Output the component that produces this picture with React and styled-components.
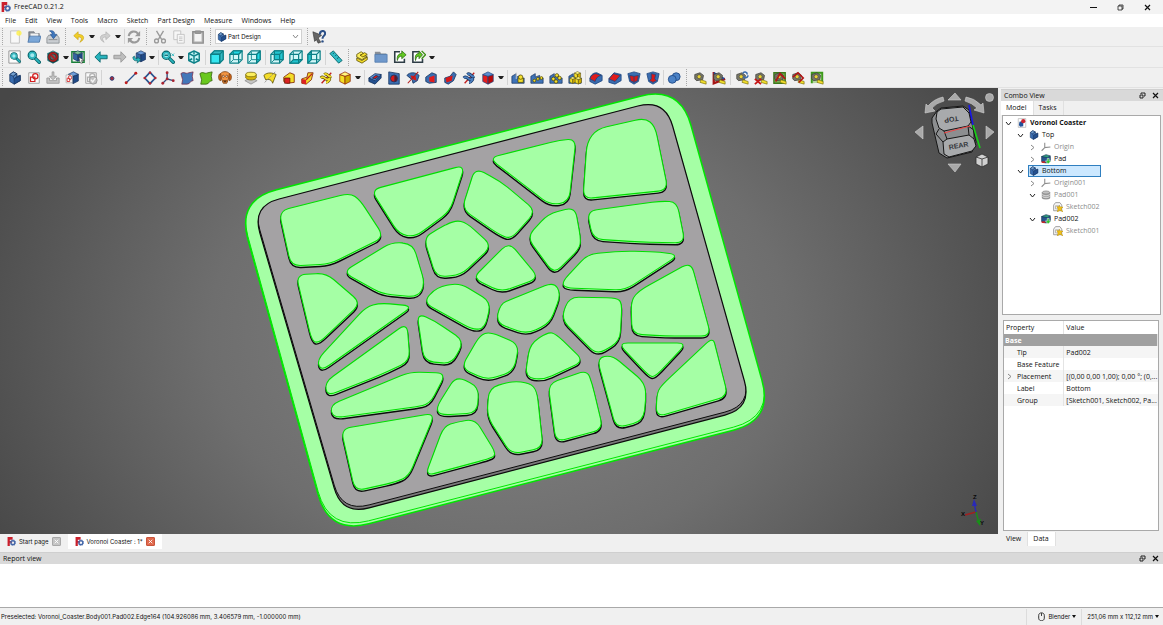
import { useState } from "react";
import styled, { createGlobalStyle } from "styled-components";

const GlobalStyle = createGlobalStyle`
  * {
    box-sizing: border-box;
  }

  body {
    margin: 0;
    background: #f0f0f0;
    color: #111;
    font-family: "Open Sans", "Noto Sans", sans-serif;
    font-size: 7px;
    line-height: 12px;
  }

  button,
  select {
    margin: 0;
    padding: 0;
    border: none;
    background: none;
    color: inherit;
    font: inherit;
  }
`;

const Window = styled.div`
  display: flex;
  flex-direction: column;
  min-height: 100vh;
`;

const TitleBar = styled.header`
  display: flex;
  align-items: center;
  gap: 3px;
  height: 14px;
  padding: 0 4px 0 1px;
  background: #f3f3f3;
`;

const Title = styled.h1`
  flex: 1;
  margin: 0;
  font-size: 7px;
  font-weight: 400;
`;

const WindowButton = styled.button`
  display: flex;
  align-items: center;
  justify-content: center;
  width: 24px;
  height: 12px;
`;

const MenuBar = styled.nav`
  display: flex;
  gap: 9px;
  height: 13px;
  padding-left: 5px;
  background: #fff;
`;

const ToolRow = styled.div`
  display: flex;
  align-items: center;
  height: ${({ $height }) => $height || 20}px;
  border-bottom: 1px solid #e2e2e2;
  background: #f0f0f0;
`;

const ToolGroup = styled.div`
  display: flex;
  justify-content: space-between;
  width: ${({ $width }) => $width || 14}px;
`;

const ToolButton = styled.button`
  display: flex;
  width: 14px;
  height: 14px;

  svg {
    width: 14px;
    height: 14px;
  }
`;

const CaretButton = styled.button`
  width: 9px;
  height: 14px;
  padding-left: 3px;

  &::before {
    content: "";
    display: block;
    border: 2px solid transparent;
    border-top: 3px solid #222;
    border-bottom: none;
  }
`;

const Space = styled.span`
  width: ${({ $width }) => $width || 7}px;
  height: 15px;
  background: ${({ $line }) =>
    $line ? "linear-gradient(#d4d4d4, #d4d4d4) center / 1px 100% no-repeat" : "none"};
`;

const Grip = styled.span`
  width: ${({ $width }) => $width || 12}px;
  height: 17px;
  padding-left: ${({ $width }) => ($width === 8 ? 2 : 5)}px;

  &::before {
    content: "";
    display: block;
    width: 2px;
    height: 100%;
    border-left: 1px dotted #a8a8a8;
  }
`;

const WorkbenchBox = styled.label`
  display: flex;
  align-items: center;
  gap: 1px;
  width: 87px;
  height: 15px;
  padding: 0 2px 0 1px;
  border: 1px solid #d0d0d0;
  background: #fff;

  svg {
    flex: none;
    width: 10px;
    height: 10px;
  }

  svg:last-child {
    width: 7px;
    height: 7px;
  }
`;

const WorkbenchSelect = styled.select`
  flex: 1;
  appearance: none;
  min-width: 0;
  height: 12px;
  outline: none;
  font-family: Inter, sans-serif;
  font-size: 6px;
`;

const Middle = styled.main`
  display: flex;
  flex: 1;
`;

const MdiArea = styled.section`
  display: flex;
  flex: 1;
  flex-direction: column;
  min-width: 0;
`;

const Viewport = styled.div`
  position: relative;
  display: flex;
  flex: 1;
  background: radial-gradient(ellipse 58% 100% at 50% 55%, #858585, #6e6e6e 50%, #474747 100%);
`;

const Scene = styled.svg`
  flex: 1;
  width: 100%;
  height: 100%;
  min-height: 0;
`;

const NavCubeOverlay = styled.div`
  position: absolute;
  top: 0;
  right: 0;
  width: 86px;
  height: 88px;
`;

const AxisOverlay = styled.div`
  position: absolute;
  right: 8px;
  bottom: 4px;
  width: 32px;
  height: 38px;
`;

const MdiTabs = styled.div`
  display: flex;
  height: 15px;
  font-family: Inter, sans-serif;
  font-size: 6px;
`;

const MdiTab = styled.div`
  display: flex;
  align-items: center;
  gap: 3px;
  padding: 0 7px;
  background: ${({ $active }) => ($active ? "#fff" : "#f0f0f0")};
`;

const CloseTab = styled.button`
  display: flex;
  align-items: center;
  justify-content: center;
  width: 9px;
  height: 9px;
  border: 1px solid ${({ $active }) => ($active ? "#c9553c" : "#a8a8a8")};
  border-radius: 1px;
  background: ${({ $active }) => ($active ? "#e0694c" : "#c4c4c4")};
  color: #fff;
`;

const Dock = styled.aside`
  display: flex;
  flex-direction: column;
  width: 165px;
  padding: 0 0 3px 3px;
`;

const DockHeader = styled.header`
  display: flex;
  align-items: center;
  gap: 6px;
  height: 12px;
  margin-top: ${({ $top }) => $top || 0}px;
  padding: 0 4px 0 3px;
  border-top: 1px solid #cfcfcf;
  background: #d9d9d9;
`;

const DockTitle = styled.h2`
  flex: 1;
  margin: 0;
  font-size: 7px;
  font-weight: 400;
  line-height: 11px;
`;

const DockButton = styled.button`
  display: flex;
  width: 7px;
  height: 7px;
`;

const Tabs = styled.div`
  display: flex;
  height: 14px;
`;

const Tab = styled.button`
  padding: 0 6px 0 5px;
  border-right: 1px solid #e0e0e0;
  background: ${({ $active }) => ($active ? "#fff" : "#f0f0f0")};
`;

const Tree = styled.ul`
  height: 200px;
  margin: 0 2px 5px 1px;
  padding: 1px 0;
  border: 1px solid #a9a9a9;
  background: #fff;
  list-style: none;
`;

const TreeItem = styled.li`
  display: flex;
  align-items: center;
  height: 12px;
  padding-left: ${({ $level }) => 2 + $level * 12}px;
  color: ${({ $dim }) => ($dim ? "#8c8c8c" : "#111")};
  font-weight: ${({ $bold }) => ($bold ? 700 : 400)};
`;

const Expander = styled.button`
  display: flex;
  width: 11px;
  height: 7px;
`;

const TreeLabel = styled.span`
  display: flex;
  align-items: center;
  gap: 3px;
  min-width: ${({ $selected }) => ($selected ? 73 : 0)}px;
  height: 12px;
  border: 1px solid ${({ $selected }) => ($selected ? "#2f7fc0" : "transparent")};
  background: ${({ $selected }) => ($selected ? "#cce8ff" : "none")};

  svg {
    width: 10px;
    height: 10px;
  }
`;

const PropertyBox = styled.div`
  flex: 1;
  margin: 0 4px 1px 2px;
  border: 1px solid #a9a9a9;
  background: #fff;
`;

const PropertyTable = styled.table`
  width: 100%;
  border-collapse: collapse;
  table-layout: fixed;

  th,
  td {
    height: 12px;
    padding: 0 0 0 2px;
    font-weight: 400;
    line-height: 11px;
    text-align: left;
    white-space: nowrap;
  }

  th:first-child,
  td:first-child {
    border-right: 1px solid #e4e4e4;
  }

  thead th {
    height: 13px;
  }
`;

const GroupRow = styled.tr`
  background: #a0a0a0;
  color: #fff;

  && th {
    font-weight: 700;
    padding-left: 1px;
  }
`;

const PropertyRow = styled.tr`
  background: ${({ $odd }) => ($odd ? "#f5f5f5" : "#fff")};
`;

const PropertyName = styled.span`
  display: flex;
  align-items: center;
  padding-left: ${({ $expandable }) => ($expandable ? 0 : 11)}px;
`;

const ReportView = styled.section`
  display: flex;
  flex-direction: column;
`;

const ReportBody = styled.div`
  height: 44px;
  border-bottom: 1px solid #a9a9a9;
  background: #fff;
`;

const StatusBar = styled.footer`
  display: flex;
  align-items: center;
  height: 17px;
  padding: 0 4px 0 1px;
  font-family: Inter, sans-serif;
  font-size: 6px;
`;

const StatusText = styled.span`
  flex: 1;
`;

const StatusButton = styled.button`
  display: flex;
  align-items: center;
  gap: 2px;
  height: 16px;
  padding-left: ${({ $wide }) => ($wide ? 10 : 5)}px;
  padding-right: ${({ $wide }) => ($wide ? 5 : 0)}px;
  border-left: 1px solid #dcdcdc;

  &::after {
    content: "";
    border: 2px solid transparent;
    border-top: 3px solid #111;
    border-bottom: none;
  }
`;

/* ---------- icons ---------- */

const Svg = ({ children, size = 16, box = "0 0 16 16" }) => (
  <svg viewBox={box} width={size} height={size} aria-hidden="true">
    {children}
  </svg>
);

const Cube = ({ top, left, right, line = "#111", x = 0, y = 0, s = 1 }) => (
  <g transform={`translate(${x} ${y}) scale(${s})`} stroke={line} strokeWidth="0.8" strokeLinejoin="round">
    <path d="M2 4 8 6 8 15 2 12Z" fill={left} />
    <path d="M8 6 14 4 14 12 8 15Z" fill={right} />
    <path d="M2 4 8 1 14 4 8 6Z" fill={top} />
  </g>
);

const Logo = () => (
  <>
    <path d="M1 0H10V5H5V7H9V10H5V16H1Z" fill="#cb1f2b" />
    <circle cx="10.500" cy="10" r="3.400" fill="none" stroke="#4567a8" strokeWidth="2.400" />
    <circle cx="10.500" cy="10" r="5" fill="none" stroke="#4567a8" strokeWidth="1.400" strokeDasharray="2 2" />
  </>
);

const WireCube = ({ face }) => (
  <g fill="none" stroke="#0d8087" strokeWidth="1.400" strokeLinejoin="round">
    <path d="M1 5 5 1H15V11L11 15H1Z" fill="#d3f7f8" />
    {face === "front" && <path d="M1 5 5 1H15V11L11 15V5Z" fill="#34b9c2" />}
    {face === "front" && <path d="M1 5H11V15H1Z" fill="#35e6f0" />}
    {face === "top" && <path d="M1 5 5 1H15L11 5Z" fill="#22d8e4" />}
    {face === "right" && <path d="M11 5 15 1V11L11 15Z" fill="#22d8e4" />}
    {face === "rear" && <path d="M5 1H15V11H5Z" fill="#22c4cf" />}
    {face === "bottom" && <path d="M1 15 5 11H15L11 15Z" fill="#22c4cf" />}
    {face === "left" && <path d="M1 5 5 1V11L1 15Z" fill="#22c4cf" />}
    <path d="M1 5H11V15M11 5 15 1" />
    {face !== "front" && <path d="M5 2V11H14M5 11 2 14" strokeWidth="1" />}
  </g>
);

const Magnifier = () => (
  <>
    <path d="M9 9 14 14" stroke="#0a666c" strokeWidth="4" strokeLinecap="round" />
    <path d="M9 9 14 14" stroke="#2ab7c0" strokeWidth="2" strokeLinecap="round" />
    <circle cx="6" cy="6" r="4.600" fill="#a5e9ee" stroke="#0a666c" strokeWidth="1.500" />
    <circle cx="6" cy="6" r="3.200" fill="none" stroke="#2ab7c0" strokeWidth="1.600" />
  </>
);

const Measure = ({ children }) => (
  <>
    {children}
    <path d="M2 4 8 2 12 5 11 10 4 11 2 9Z" fill="#77776b" stroke="#3a3a34" strokeWidth="0.8" />
    <circle cx="7" cy="6.500" r="2.300" fill="#e8d335" stroke="#444" strokeWidth="0.7" />
    <path d="M9 10 15 12V15L8 13Z" fill="#f2df2c" stroke="#6e650a" strokeWidth="0.7" />
  </>
);

const blue = { top: "#6d9ddb", left: "#3465a4", right: "#204a87", line: "#16325c" };
const yellow = { top: "#fff67d", left: "#f3df26", right: "#d1ad00", line: "#3d3500" };
const red = { top: "#5c8ed0", left: "#e51d1d", right: "#b80808", line: "#1d4680" };

const BodyShape = () => (
  <g stroke="#16325c" strokeWidth="0.8" strokeLinejoin="round">
    <path d="M2 4 6 1 10 3V6L14 5V11L7 15 2 12Z" fill="#3a6db0" />
    <path d="M2 4 6 1 10 3 6 6Z" fill="#729fcf" />
    <path d="M7 9 14 5V11L7 15Z" fill="#23508f" />
    <path d="M6 6 10 3V6L7 9Z" fill="#4b7fc0" />
  </g>
);

const SketchMark = ({ color = "#d41f1f" }) => (
  <g fill="none" stroke={color} strokeWidth="1.400">
    <path d="M2 2H14V14H2Z" stroke="#999" fill="#fafafa" strokeWidth="1" />
    <circle cx="9.500" cy="6" r="3" />
    <path d="M4 7H9V12H4Z" />
  </g>
);

const Wedge = ({ children }) => (
  <>
    <path d="M1 6 6 3V7L11 5V9L15 8V14H1Z" fill="#3f73b8" stroke="#16325c" strokeWidth="0.8" />
    {children}
  </>
);

const Ball = ({ x, y, r = 2 }) => (
  <circle cx={x} cy={y} r={r} fill="#f5e12f" stroke="#4a4100" strokeWidth="0.8" />
);

const ICONS = {
  logo: <Logo />,
  newDoc: (
    <>
      <path d="M3 1H13V15H3Z" fill="#f8f8f8" stroke="#bdbdbd" />
      <circle cx="12.500" cy="3.500" r="3" fill="#fdf04f" opacity=".85" />
    </>
  ),
  open: (
    <>
      <path d="M2 2H8L9 4H14V13H2Z" fill="#8c9198" stroke="#60656c" strokeWidth="0.7" />
      <path d="M4 4H13V9H4Z" fill="#f2f2f2" />
      <path d="M3 7H16L14 14H1Z" fill="#7ba7d8" stroke="#3f6da4" strokeWidth="0.8" />
    </>
  ),
  save: (
    <>
      <path d="M1 9 3 6H13L15 9V15H1Z" fill="#c9cdd1" stroke="#7a7f84" strokeWidth="0.8" />
      <path d="M3 11H13" stroke="#888" />
      <path d="M4 1C8 0 10 2 10 5H12.500L8.500 10 5 5H7C7 3 6 2 4 1Z" fill="#3f78be" stroke="#204a87" strokeWidth="0.7" />
    </>
  ),
  undo: <path d="M7 2 2 6.500 7 11V8C11 8 12 10 9 14 15 11 15 5 7 5Z" fill="#f1ce28" stroke="#c9a51a" strokeWidth="0.8" />,
  redo: <path d="M9 2 14 6.500 9 11V8C5 8 4 10 7 14 1 11 1 5 9 5Z" fill="#cfcfcf" stroke="#b2b2b2" strokeWidth="0.8" />,
  refresh: (
    <g fill="none" stroke="#9a9a9a" strokeWidth="2.400">
      <path d="M2 7C3 1 10 0 13 5M14 9C13 15 6 16 3 11" />
      <path d="M15 1V7H9ZM1 15V9H7Z" fill="#9a9a9a" stroke="none" />
    </g>
  ),
  cut: (
    <g fill="none" stroke="#999" strokeWidth="1.500">
      <path d="M4 1 10 11M12 1 6 11" />
      <circle cx="4" cy="12.500" r="2.200" />
      <circle cx="12" cy="12.500" r="2.200" />
    </g>
  ),
  copy: (
    <g fill="#f6f6f6" stroke="#c1c1c1">
      <path d="M2 1H10V11H2Z" />
      <path d="M6 5H14V15H6Z" />
      <path d="M8 8H12M8 10H12M8 12H12" />
    </g>
  ),
  paste: (
    <g stroke="#8e8e8e">
      <path d="M2 2H14V15H2Z" fill="#b9b9b9" strokeWidth="1.500" />
      <path d="M4 4H12V13H4Z" fill="#f4f4f4" stroke="none" />
      <path d="M5 1H11V4H5Z" fill="#999" />
    </g>
  ),
  help: (
    <>
      <path d="M1 2 11 6 7 9 10 14 7 15 5 11 3 13Z" fill="#666" stroke="#333" strokeWidth="0.700" />
      <path d="M9 5C9 0 15 0 15 4 15 7 12 6 12 10" fill="none" stroke="#2b4f86" strokeWidth="2.300" />
      <circle cx="12" cy="13" r="1.400" fill="#2b4f86" />
    </>
  ),
  fitAll: (
    <>
      <path d="M1 1H14V15H1Z" fill="#fcfcfc" stroke="#8d8d8d" />
      <g transform="translate(2 2) scale(.8)">
        <Magnifier />
      </g>
    </>
  ),
  zoom: <Magnifier />,
  drawStyle: (
    <>
      <Cube top="#4fc7cc" left="#239ca4" right="#126f76" line="#0a555a" />
      <circle cx="8" cy="8" r="4.600" fill="#5f6466" stroke="#2b2b2b" strokeWidth="3" />
      <circle cx="8" cy="8" r="4.600" fill="none" stroke="#b32020" strokeWidth="1.600" />
      <path d="M5 5 11 11" stroke="#b32020" strokeWidth="1.800" />
    </>
  ),
  boxSelect: (
    <>
      <path d="M1 2H15V14H1Z" fill="none" stroke="#188038" strokeWidth="1.600" />
      <Cube {...blue} x={1} s={0.85} top="#80c590" />
      <path d="M9 8 15 12 12 12 13 15 11 15 10 13Z" fill="#fff" stroke="#222" strokeWidth="0.600" />
    </>
  ),
  back: <path d="M7 2V6H15V10H7V14L1 8Z" fill="#27b3bd" stroke="#0a666c" />,
  forward: <path d="M9 2V6H1V10H9V14L15 8Z" fill="#bdbdbd" stroke="#979797" />,
  linkGo: (
    <>
      <Cube {...blue} x={3} s={0.9} />
      <path d="M1 8C1 12 4 13 6 12V15L10 11 6 8V10C4 10 3 9 3 7Z" fill="#2ab7c0" stroke="#0a555a" strokeWidth="0.7" />
    </>
  ),
  syncView: (
    <>
      <Magnifier />
      <path d="M4 6H8" stroke="#0a666c" strokeWidth="1.500" />
      <path d="M12 4 15 7M15 4 12 7" stroke="#2ab7c0" />
    </>
  ),
  axo: (
    <g fill="none" stroke="#0d8087" strokeWidth="1.600" strokeLinejoin="round">
      <path d="M8 1 14 4V12L8 15 2 12V4Z" fill="#c8f5f7" />
      <path d="M2 4 8 7 14 4M8 7V15M8 1V5M2 12 6 10M14 12 10 10" />
    </g>
  ),
  front: <WireCube face="front" />,
  top: <WireCube face="top" />,
  right: <WireCube face="right" />,
  rear: <WireCube face="rear" />,
  bottom: <WireCube face="bottom" />,
  left: <WireCube face="left" />,
  ruler: (
    <>
      <path d="M1 4 5 1 15 12 11 15Z" fill="#31bcc6" stroke="#0a666c" />
      <path d="M6 3 4.500 4.500M8.500 5.500 7 7M11 8.500 9 10" stroke="#0a555a" />
    </>
  ),
  part: (
    <g fill="#f3dc29" stroke="#5b4e00" strokeWidth="0.9" strokeLinejoin="round">
      <path d="M2 9 8 12 14 8V11L8 15 2 12Z" />
      <path d="M2 5 7 2 10 4 6 6 14 7 8 11 2 8Z" fill="#fbee5e" />
      <path d="M6 6 11 3 14 5 9 8Z" />
    </g>
  ),
  folder: (
    <>
      <path d="M1 2H7L8 4H14V8H1Z" fill="#8a8f96" />
      <path d="M1 5H15V14H1Z" fill="#6f98cb" stroke="#4a74a8" strokeWidth="0.8" />
    </>
  ),
  link: (
    <>
      <path d="M8 2H2V14H13V10" fill="#fff" stroke="#2e3d46" strokeWidth="1.800" />
      <path d="M5 12C4 6 7 4 10 4V1L15 5.500 10 10V7C8 7 6 8 5 12Z" fill="#63c923" stroke="#22610a" strokeWidth="0.8" />
    </>
  ),
  links: (
    <>
      <path d="M8 2H1V14H12V10" fill="#fff" stroke="#2e3d46" strokeWidth="1.800" />
      <path d="M4 12C3 6 5 4 8 4V1L12 5.500 8 10V7C6 7 5 8 4 12Z" fill="#63c923" stroke="#22610a" strokeWidth="0.8" />
      <path d="M11 1 15.500 5.500 11 10" fill="none" stroke="#3c8f14" strokeWidth="1.600" />
    </>
  ),
  body: <BodyShape />,
  sketch: <SketchMark />,
  importSketch: (
    <g fill="#c4c4c4" stroke="#9c9c9c">
      <path d="M1 8H4V11H12V8H15V14H1Z" />
      <path d="M7 1H9V6H12L8 10 4 6H7Z" />
    </g>
  ),
  mapSketch: (
    <>
      <Cube {...blue} x={2} s={0.95} />
      <g transform="translate(0 3) scale(.6 .75)">
        <SketchMark />
      </g>
    </>
  ),
  validate: (
    <>
      <SketchMark color="#b0b0b0" />
      <circle cx="10.500" cy="10.500" r="4.500" fill="#c2c2c2" stroke="#999" />
      <path d="M8 10 10 12.500 13 8" fill="none" stroke="#f5f5f5" strokeWidth="1.500" />
    </>
  ),
  point: <circle cx="8" cy="8.500" r="2.200" fill="#a32b3c" stroke="#28407c" />,
  line: (
    <>
      <path d="M2 14 14 2" stroke="#2b548f" strokeWidth="1.500" />
      <circle cx="2.500" cy="13.500" r="1.700" fill="#c01d1d" />
      <circle cx="13.500" cy="2.500" r="1.700" fill="#c01d1d" />
    </>
  ),
  plane: (
    <>
      <path d="M8 1.500 14 8 8 14.500 2 8Z" fill="#f4f4f4" stroke="#2b548f" strokeWidth="2" />
      {[[8, 2], [14, 8], [8, 14], [2, 8]].map(([x, y]) => (
        <circle key={`${x}-${y}`} cx={x} cy={y} r="1.500" fill="#b62631" />
      ))}
    </>
  ),
  lcs: (
    <>
      <path d="M7 2V9L14 11M7 9 2 14" fill="none" stroke="#3b4b7c" strokeWidth="1.600" />
      {[[7, 2], [14, 11], [2, 14], [7, 9]].map(([x, y]) => (
        <circle key={`${x}-${y}`} cx={x} cy={y} r="1.600" fill="#a82330" />
      ))}
    </>
  ),
  binder: <path d="M1 3C5 0 6 4 10 2L15 1 14 6 15 11C11 11 12 15 8 15L2 15 3 10Z" fill="#4377b9" stroke="#7d2741" strokeWidth="0.8" />,
  subBinder: <path d="M1 3C5 0 6 4 10 2L15 1 14 6 15 11C11 11 12 15 8 15L2 15 3 10Z" fill="#69c81e" stroke="#35610d" strokeWidth="0.9" />,
  clone: (
    <g stroke="#7a3b0a" strokeWidth="0.9">
      <path d="M3 3C0 3 0 11 3 11L4 5ZM13 3C16 3 16 11 13 11L12 5Z" fill="#d0691b" />
      <path d="M3 3C5 0 11 0 13 3L12 9 10 14H6L4 9Z" fill="#f29542" />
      <circle cx="6" cy="6" r="1.200" fill="#fff" />
      <circle cx="10" cy="6" r="1.200" fill="#fff" />
      <path d="M6 11H10L8 13Z" fill="#222" />
    </g>
  ),
  pad: (
    <g stroke="#6b5c00" strokeWidth="0.8">
      <path d="M1 11 8 8 15 11 8 15Z" fill="#c4c4c4" stroke="#8a8a8a" />
      <path d="M2 4V8C4 11 12 11 14 8V4Z" fill="#d8b80b" />
      <ellipse cx="8" cy="4" rx="6" ry="2.600" fill="#fbee5e" />
    </g>
  ),
  revolve: (
    <>
      <path d="M1 5C5 1 11 2 15 4L11 14C10 10 7 9 3 10Z" fill="#f3dc29" stroke="#5b4e00" strokeWidth="0.9" />
      <path d="M14 1 2 13" stroke="#888" strokeDasharray="2 1" />
    </>
  ),
  loft: (
    <>
      <path d="M2 7 9 2 14 4V13L6 14 2 12Z" fill="#f3dc29" stroke="#7a1a00" strokeWidth="0.9" />
      <path d="M3 8H9V14H3Z" fill="#dd2222" stroke="#5b1100" strokeWidth="0.8" />
    </>
  ),
  pipe: (
    <>
      <path d="M2 9 8 7 9 2 15 2 13 10 7 15 2 14Z" fill="#f3dc29" stroke="#7a1a00" strokeWidth="0.9" />
      <path d="M2 9 7 10V15L2 14Z" fill="#dd2222" />
      <path d="M7 10 14 3" stroke="#c01d1d" strokeWidth="1.500" />
    </>
  ),
  helix: (
    <>
      <path d="M3 14 14 2" stroke="#c01d1d" strokeWidth="1.500" />
      <path d="M2 8C6 4 7 12 11 9 14 7 11 13 8 13M6 4C10 1 10 8 14 6" fill="none" stroke="#5b4e00" strokeWidth="3.400" />
      <path d="M2 8C6 4 7 12 11 9 14 7 11 13 8 13M6 4C10 1 10 8 14 6" fill="none" stroke="#f3dc29" strokeWidth="2" />
    </>
  ),
  addCube: <Cube {...yellow} line="#8c1c00" />,
  pocket: (
    <g stroke="#16325c" strokeWidth="0.9">
      <path d="M1 8V12L8 15 15 8V4Z" fill="#23508f" />
      <path d="M1 8 8 3 15 4 8 11Z" fill="#5c8ed0" />
      <path d="M5 8 9 5 12 6 8 9Z" fill="#d81818" />
    </g>
  ),
  hole: (
    <g stroke="#16325c" strokeWidth="0.9">
      <path d="M2 1 14 3V15H2Z" fill="#3b6fb3" />
      <circle cx="8" cy="8.500" r="4" fill="#d81818" />
      <path d="M9 5A4 4 0 0 1 9 12Z" fill="#8b0b0b" />
    </g>
  ),
  groove: (
    <>
      <path d="M1 5C4 1 11 1 15 5L13 11 8 14 7 10Z" fill="#3a6db0" stroke="#16325c" strokeWidth="0.9" />
      <path d="M5 5 11 6 12 11 7 9Z" fill="#d81818" />
      <path d="M14 1 2 14" stroke="#b31c1c" strokeWidth="1.200" />
    </>
  ),
  subLoft: (
    <>
      <path d="M2 7 9 2 14 4V13L6 14 2 12Z" fill="#3a6db0" stroke="#16325c" strokeWidth="0.9" />
      <path d="M6 7 12 5V13L6 12Z" fill="#e11d1d" />
    </>
  ),
  subPipe: (
    <>
      <path d="M2 8 8 6 12 1 15 4 12 11 6 15 2 13Z" fill="#3a6db0" stroke="#16325c" strokeWidth="0.9" />
      <path d="M3 8 11 5 10 11 4 13Z" fill="#d81818" />
    </>
  ),
  subHelix: (
    <>
      <path d="M3 14 14 2" stroke="#c01d1d" strokeWidth="1.500" />
      <path d="M2 8C6 4 7 12 11 9 14 7 11 13 8 13M6 4C10 1 10 8 14 6" fill="none" stroke="#16325c" strokeWidth="3.600" />
      <path d="M2 8C6 4 7 12 11 9 14 7 11 13 8 13M6 4C10 1 10 8 14 6" fill="none" stroke="#4b7fc0" strokeWidth="2" />
    </>
  ),
  subCube: <Cube {...red} />,
  mirror: (
    <Wedge>
      <path d="M8 8H14V13H8Z" fill="#f5e12f" stroke="#4a4100" strokeWidth="0.8" />
      <Ball x={11} y={7} r={2.5} />
      <path d="M6 1V9" stroke="#ddd" />
    </Wedge>
  ),
  linearPattern: (
    <Wedge>
      <Ball x={5} y={11} r={1.6} />
      <Ball x={9} y={9} r={1.6} />
      <Ball x={13} y={8} r={1.6} />
    </Wedge>
  ),
  polarPattern: (
    <Wedge>
      <Ball x={5} y={9} />
      <Ball x={9} y={5} />
      <Ball x={12} y={8} />
      <Ball x={8} y={12} />
    </Wedge>
  ),
  multi: (
    <Wedge>
      <Cube {...yellow} x={6} y={0} s={0.6} />
      <Cube {...yellow} x={1} y={6} s={0.55} />
      <Cube {...yellow} x={7} y={6} s={0.6} />
    </Wedge>
  ),
  fillet: (
    <g stroke="#1d4680" strokeWidth="0.9">
      <path d="M1 9C2 4 5 2 9 2L15 5V11L7 15 1 12Z" fill="#3a6db0" />
      <path d="M1 9C2 5 5 3 8 3L14 5C10 6 8 8 7 12Z" fill="#e01b1b" />
    </g>
  ),
  chamfer: (
    <g stroke="#1d4680" strokeWidth="0.9">
      <path d="M1 9 7 2 15 4V11L8 15 1 13Z" fill="#3a6db0" />
      <path d="M1 9 6 3 14 5 8 12Z" fill="#e01b1b" />
    </g>
  ),
  draft: (
    <g stroke="#1d4680" strokeWidth="0.9">
      <path d="M1 3 8 1 15 3 13 12 8 15 3 12Z" fill="#3a6db0" />
      <path d="M3 5 8 6 13 5 12 11 8 13 4 11Z" fill="#d81818" />
      <path d="M8 6V13" />
    </g>
  ),
  thickness: (
    <g stroke="#1d4680" strokeWidth="0.9">
      <path d="M1 3 8 1 15 3 13 12 8 15 3 12Z" fill="#3a6db0" />
      <path d="M6 3 11 4 10 9 12 11 8 13 4 11 6 9Z" fill="#d81818" />
    </g>
  ),
  boolean: (
    <g fill="#4b82c6" stroke="#204a87">
      <circle cx="10.500" cy="6.500" r="4.500" />
      <circle cx="6" cy="9.500" r="4.500" />
    </g>
  ),
  measureLinear: <Measure />,
  measureAngular: (
    <Measure>
      <path d="M2 1V14L15 9" fill="none" stroke="#a61515" strokeWidth="2.600" />
      <path d="M2 2 14 9" stroke="#234f9c" strokeWidth="2" />
    </Measure>
  ),
  measureRefresh: (
    <>
      <Measure />
      <path d="M9 3C10 0 14 1 14 4M15 5C14 9 10 8 10 6" fill="none" stroke="#3b6cae" strokeWidth="1.800" />
    </>
  ),
  measureClear: (
    <>
      <Measure />
      <path d="M1 9 8 15M8 9 1 15" stroke="#c51616" strokeWidth="2.200" />
    </>
  ),
  measureAll: (
    <>
      <path d="M1 2H14V14H1Z" fill="#7aae54" stroke="#3d7a1b" strokeWidth="1.500" />
      <Measure />
      <path d="M3 12 8 3 14 9" fill="none" stroke="#b41515" strokeWidth="1.800" />
    </>
  ),
  measure3d: (
    <>
      <Measure />
      <path d="M2 7 8 2 14 8 9 13" fill="none" stroke="#b41515" strokeWidth="1.800" />
    </>
  ),
  measureDelta: (
    <>
      <path d="M2 14V2H14V13" fill="#b3d69d" stroke="#3d9a1b" strokeWidth="2.200" />
      <Measure />
    </>
  ),
  document: (
    <>
      <path d="M2 1H14V15H2Z" fill="#fff" stroke="#aaa" />
      <path d="M4 6 8 5 10 7V13L5 14 3 11Z" fill="#23529a" />
      <circle cx="10" cy="5" r="3.400" fill="#cb2431" />
    </>
  ),
  origin: <path d="M6 1V9L15 8M6 9 1 14" fill="none" stroke="#8d8d8d" strokeWidth="1.700" />,
  padFeature: (
    <>
      <path d="M1 4V12C3 15 12 15 15 12V4Z" fill="#28568d" stroke="#153155" />
      <path d="M1 4 8 1 15 3 10 6Z" fill="#2e9d80" stroke="#153155" />
      <path d="M1 13H7" stroke="#c22" strokeWidth="2.500" />
      <path d="M10 7H13V11H16L11.500 16 7 11H10Z" fill="#2fc52f" stroke="#fff" strokeWidth="0.8" />
    </>
  ),
  padDim: (
    <g stroke="#777" fill="#a5a5a5">
      <path d="M2 4V13C4 15 12 15 14 13V4Z" />
      <ellipse cx="8" cy="4" rx="6" ry="2.500" fill="#c2c2c2" />
      <path d="M2 7C4 10 12 10 14 7M2 10C4 13 12 13 14 10" fill="none" stroke="#eee" />
    </g>
  ),
  sketchDim: (
    <>
      <path d="M4 1H11L14 5V14H1V5Z" fill="#f7f7f7" stroke="#8e8e8e" strokeWidth="1.300" />
      <path d="M4 6H9V11H4Z" fill="none" stroke="#999" />
      <path d="M10 5 12 8 16 8 13 11 16 16 11 13 7 16 8 11 6 7 10 8Z" fill="#f2c318" stroke="#b08600" strokeWidth="0.7" />
    </>
  ),
};

const Icon = ({ name, size }) => <Svg size={size}>{ICONS[name]}</Svg>;

const RestoreIcon = () => (
  <Svg size={7} box="0 0 7 7">
    <path d="M2 2V1H6V4H5M1 3H4V6H1Z" fill="none" stroke="#222" />
  </Svg>
);

const CrossIcon = ({ size = 7 }) => (
  <Svg size={size} box="0 0 7 7">
    <path d="M1 1 6 6M6 1 1 6" stroke="currentColor" strokeWidth="1.200" />
  </Svg>
);

const Chevron = ({ open, color }) => (
  <Svg size={7} box="0 0 7 7">
    <path
      d={open ? "M1 2 3.500 5 6 2" : "M2 1 5 3.500 2 6"}
      fill="none"
      stroke={color || (open ? "#222" : "#888")}
    />
  </Svg>
);

/* ---------- 3D view ---------- */

// polygon with every corner softened by a quadratic curve
const softPolygon = (points, cut) => {
  const toward = (from, to) => {
    const dx = to[0] - from[0];
    const dy = to[1] - from[1];
    const len = Math.hypot(dx, dy);
    const t = Math.min(cut, len / 2) / len;
    return `${(from[0] + dx * t).toFixed(1)} ${(from[1] + dy * t).toFixed(1)}`;
  };

  const parts = points.map((p, i) => {
    const prev = points[(i + points.length - 1) % points.length];
    const next = points[(i + 1) % points.length];
    return `${i === 0 ? "M" : "L"}${toward(p, prev)}Q${p[0]} ${p[1]} ${toward(p, next)}`;
  });

  return parts.join("") + "Z";
};

const RIM = softPolygon([[237, 200], [680, 86], [773, 420], [329, 534]], 41);
const FACE = softPolygon([[252, 206], [665, 99], [752, 408], [342, 515]], 28);

const CELLS = [
  [[279, 211], [350, 193], [360, 200], [384, 237], [330, 264], [291, 266]],
  [[371, 190], [465, 165], [450, 211], [415, 237], [399, 234]],
  [[475, 168], [500, 181], [536, 211], [511, 239], [500, 235], [462, 209]],
  [[424, 238], [436, 230], [455, 220], [467, 223], [492, 246], [461, 275], [436, 277]],
  [[343, 272], [392, 242], [413, 244], [425, 284], [418, 297], [382, 294]],
  [[296, 275], [326, 273], [361, 303], [319, 343], [312, 341]],
  [[317, 360], [366, 307], [380, 303], [413, 306], [321, 371]],
  [[325, 382], [407, 323], [410, 361], [380, 375], [327, 396]],
  [[330, 405], [410, 372], [446, 373], [430, 404], [415, 407], [333, 418]],
  [[341, 429], [435, 413], [409, 476], [396, 482], [355, 491]],
  [[425, 476], [444, 426], [457, 422], [475, 419], [497, 455], [488, 459]],
  [[436, 408], [456, 376], [479, 387], [477, 413], [440, 415]],
  [[417, 313], [435, 321], [464, 341], [452, 364], [424, 361]],
  [[423, 302], [437, 287], [460, 283], [491, 302], [485, 328], [473, 330]],
  [[473, 278], [484, 267], [509, 242], [539, 278], [501, 292]],
  [[527, 237], [548, 214], [575, 207], [581, 240], [579, 249], [554, 274]],
  [[489, 158], [560, 140], [576, 139], [569, 202], [550, 205]],
  [[583, 199], [587, 142], [597, 129], [645, 118], [655, 126], [668, 190]],
  [[587, 211], [662, 201], [677, 202], [685, 243], [640, 242], [593, 239]],
  [[562, 282], [588, 254], [625, 251], [660, 252], [679, 255], [625, 290], [565, 288]],
  [[631, 300], [640, 290], [691, 262], [711, 336], [665, 336], [632, 334]],
  [[496, 323], [500, 304], [512, 299], [554, 282], [561, 294], [550, 323], [527, 334]],
  [[561, 319], [569, 297], [617, 298], [622, 303], [620, 341], [597, 355]],
  [[461, 368], [480, 335], [490, 332], [519, 344], [514, 371], [487, 380]],
  [[525, 377], [530, 344], [548, 332], [556, 334], [584, 361], [543, 380]],
  [[618, 343], [687, 343], [655, 377], [649, 376]],
  [[656, 417], [657, 392], [663, 384], [713, 337], [716, 349], [728, 396]],
  [[487, 416], [489, 388], [512, 381], [530, 383], [537, 391], [543, 448], [511, 454]],
  [[548, 384], [587, 370], [592, 383], [603, 429], [556, 442]],
  [[597, 358], [612, 355], [645, 383], [646, 400], [643, 421], [616, 428]],
];

const Coaster = () => (
  <Scene viewBox="0 88 998 446" preserveAspectRatio="xMidYMid meet">
    <clipPath id="rim">
      <path d={RIM} />
    </clipPath>
    <clipPath id="face">
      <path d={FACE} />
    </clipPath>
    <clipPath id="upper">
      <path d={FACE} transform="translate(0 -3)" />
    </clipPath>
    <path d={RIM} fill="#a5ffa5" />
    <path d={RIM} transform="translate(0 -3)" fill="none" stroke="#00e600" clipPath="url(#rimShift)" />
    <clipPath id="rimShift">
      <path d={RIM} transform="translate(0 3)" />
    </clipPath>
    <path d={RIM} fill="none" stroke="#00e600" strokeWidth="1.500" />
    <path d={FACE} fill="#7b797b" />
    <path d={FACE} fill="#a4a2a4" clipPath="url(#upper)" />
    <g clipPath="url(#face)">
      <path d={FACE} transform="translate(0 -3)" fill="none" stroke="#0c0c0c" />
    </g>
    <path d={FACE} fill="none" stroke="#0c0c0c" strokeWidth="1.200" />
    {CELLS.map((cell) => {
      const d = softPolygon(cell, 10);
      return (
        <g key={d}>
          <path d={d} transform="translate(0 2)" fill="#a5ffa5" stroke="#0c0c0c" strokeWidth="1.400" />
          <path d={d} fill="#a5ffa5" stroke="#00df00" strokeWidth="1.100" />
        </g>
      );
    })}
  </Scene>
);

const NavCube = () => (
  <NavCubeOverlay>
    <svg viewBox="912 88 86 88" width="86" height="88" aria-hidden="true">
      <g fill="#a9a9a9" stroke="#d0d0d0" strokeWidth="0.600">
        <path d="M955 93 961 100H948Z" />
        <path d="M955 172 961 164H948Z" />
        <path d="M915 132 923 126V139Z" />
        <path d="M994 132 986 126V139Z" />
        <circle cx="989.500" cy="97.500" r="4" />
        <path d="M925 113 926 104 928 106Q934 99 943 97L944 101Q936 103 932 108L935 111Z" />
        <path d="M984 113 983 103 981 105Q974 98 966 97L965 101Q972 103 977 108L974 110Z" />
      </g>
      <g stroke="#161616" strokeWidth="1" strokeLinejoin="round">
        <path d="M932 118 937 111 941 108 963 106 969 110 972 124 976 142 972 152 947 158 939 153 932 123Z" fill="#8c8e90" />
        <path d="M937 112 941 109 963 107 969 113 971 122 968 126 944 131 939 128 936 119Z" fill="#a8aaac" />
        <path d="M943 142 947 139 969 135 974 139 976 146 972 151 949 157 944 154Z" fill="#a8aaac" />
        <path d="M944 131 947 139M939 129 936 134 943 142M968 126 969 135M968 126 974 130 974 139" fill="none" />
      </g>
      <path d="M944 133 970 126" stroke="#ef4646" />
      <path d="M969 105 973 125" stroke="#1717e8" strokeWidth="1.600" />
      <path d="M973 125 980 148" stroke="#15d315" strokeWidth="1.600" />
      <g fill="#33363b" fontSize="7" fontWeight="700" textAnchor="middle" fontFamily="Liberation Sans, sans-serif">
        <text transform="translate(951 117) rotate(171)">TOP</text>
        <text transform="translate(959 148) rotate(-10)">REAR</text>
      </g>
      <g stroke="#2d2d2d" strokeWidth="0.8" fill="#d1d1d1">
        <path d="M976 157 982 154 988 157V164L982 167 976 164Z" />
        <path d="M976 157 982 159 988 157M982 159V167" fill="none" />
      </g>
    </svg>
  </NavCubeOverlay>
);

const AxisCross = () => (
  <AxisOverlay>
    <svg viewBox="958 492 32 38" width="32" height="38" aria-hidden="true">
      <path d="M976 512 965 515" stroke="#a02020" strokeWidth="1.300" />
      <path d="M976 512 974 503" stroke="#2929b8" strokeWidth="1.300" />
      <path d="M974 499 977 506 972 506Z" fill="#2929b8" />
      <path d="M976 512 979 523" stroke="#189018" strokeWidth="1.300" />
      <path d="M976 521 981 519 980 526Z" fill="#189018" />
      <g fill="#080808" fontSize="6" fontWeight="700" fontFamily="Liberation Sans, sans-serif">
        <text x="973" y="499">Z</text>
        <text x="961" y="516">X</text>
        <text x="980" y="525">Y</text>
      </g>
    </svg>
  </AxisOverlay>
);

/* ---------- page ---------- */

const MENUS = ["File", "Edit", "View", "Tools", "Macro", "Sketch", "Part Design", "Measure", "Windows", "Help"];

const TREE = [
  { label: "Voronoi Coaster", level: 0, icon: "document", open: true, bold: true },
  { label: "Top", level: 1, icon: "body", open: true },
  { label: "Origin", level: 2, icon: "origin", open: false, dim: true },
  { label: "Pad", level: 2, icon: "padFeature", open: false },
  { label: "Bottom", level: 1, icon: "body", open: true },
  { label: "Origin001", level: 2, icon: "origin", open: false, dim: true },
  { label: "Pad001", level: 2, icon: "padDim", open: true, dim: true },
  { label: "Sketch002", level: 3, icon: "sketchDim", dim: true },
  { label: "Pad002", level: 2, icon: "padFeature", open: true },
  { label: "Sketch001", level: 3, icon: "sketchDim", dim: true },
];

const PROPERTIES = [
  ["Tip", "Pad002"],
  ["Base Feature", ""],
  ["Placement", "[(0,00 0,00 1,00); 0,00 °; (0,..."],
  ["Label", "Bottom"],
  ["Group", "[Sketch001, Sketch002, Pa..."],
];

const Tools = ({ names, width }) => (
  <ToolGroup $width={width}>
    {names.map((name) => (
      <ToolButton key={name} type="button" aria-label={name}>
        <Icon name={name} />
      </ToolButton>
    ))}
  </ToolGroup>
);

const Caret = () => <CaretButton type="button" aria-label="More" />;

const Toolbars = () => (
  <>
    <ToolRow>
      <Grip $width={8} />
      <Tools names={["newDoc", "open", "save"]} width={52} />
      <Grip />
      <Tools names={["undo"]} />
      <Caret />
      <Space $width={3} />
      <Tools names={["redo"]} />
      <Caret />
      <Space $width={6} $line />
      <Tools names={["refresh"]} />
      <Grip />
      <Tools names={["cut", "copy", "paste"]} width={52} />
      <Grip $width={10} />
      <WorkbenchBox>
        <Icon name="body" />
        <WorkbenchSelect aria-label="Workbench" defaultValue="Part Design">
          <option>Part Design</option>
        </WorkbenchSelect>
        <Chevron open color="#888" />
      </WorkbenchBox>
      <Grip $width={10} />
      <Tools names={["help"]} />
    </ToolRow>
    <ToolRow $height={21}>
      <Grip $width={8} />
      <Tools names={["fitAll", "zoom", "drawStyle"]} width={52} />
      <Caret />
      <Space $width={2} />
      <Tools names={["boxSelect"]} />
      <Space $width={9} $line />
      <Tools names={["back", "forward", "linkGo"]} width={52} />
      <Caret />
      <Space $width={6} $line />
      <Tools names={["syncView"]} />
      <Caret />
      <Space $width={3} />
      <Tools names={["axo"]} />
      <Space $width={9} $line />
      <Tools names={["front", "top", "right"]} width={51} />
      <Space $width={9} $line />
      <Tools names={["rear", "bottom", "left"]} width={51} />
      <Space $width={8} $line />
      <Tools names={["ruler"]} />
      <Grip />
      <Tools names={["part", "folder", "link", "links"]} width={71} />
      <Caret />
    </ToolRow>
    <ToolRow>
      <Grip $width={8} />
      <Tools names={["body", "sketch", "importSketch", "mapSketch", "validate"]} width={90} />
      <Space $line />
      <Tools names={["point", "line", "plane", "lcs", "binder", "subBinder", "clone"]} width={127} />
      <Grip />
      <Tools names={["pad", "revolve", "loft", "pipe", "helix", "addCube"]} width={108} />
      <Caret />
      <Space $line />
      <Tools names={["pocket", "hole", "groove", "subLoft", "subPipe", "subHelix", "subCube"]} width={127} />
      <Caret />
      <Space $line />
      <Tools names={["mirror", "linearPattern", "polarPattern", "multi"]} width={71} />
      <Space $line />
      <Tools names={["fillet", "chamfer", "draft", "thickness"]} width={71} />
      <Space $line />
      <Tools names={["boolean"]} />
      <Grip />
      <Tools names={["measureLinear", "measureAngular"]} width={33} />
      <Space $width={9} $line />
      <Tools
        names={["measureRefresh", "measureClear", "measureAll", "measure3d", "measureDelta"]}
        width={89}
      />
    </ToolRow>
  </>
);

const DockTop = ({ title, top }) => (
  <DockHeader $top={top}>
    <DockTitle>{title}</DockTitle>
    <DockButton type="button" aria-label={`Float ${title}`}>
      <RestoreIcon />
    </DockButton>
    <DockButton type="button" aria-label={`Close ${title}`}>
      <CrossIcon />
    </DockButton>
  </DockHeader>
);

const ComboView = () => {
  const [selected, setSelected] = useState("Bottom");

  return (
    <Dock>
      <DockTop title="Combo View" top={1} />
      <Tabs>
        <Tab type="button" $active>Model</Tab>
        <Tab type="button">Tasks</Tab>
      </Tabs>
      <Tree>
        {TREE.map((item) => (
          <TreeItem key={item.label} $level={item.level} $dim={item.dim} $bold={item.bold}>
            {item.open === undefined ? (
              <Space $width={11} />
            ) : (
              <Expander type="button" aria-label={`Toggle ${item.label}`}>
                <Chevron open={item.open} />
              </Expander>
            )}
            <TreeLabel $selected={selected === item.label} onClick={() => setSelected(item.label)}>
              <Icon name={item.icon} />
              {item.label}
            </TreeLabel>
          </TreeItem>
        ))}
      </Tree>
      <PropertyBox>
        <PropertyTable>
          <colgroup>
            <col width="39%" />
            <col />
          </colgroup>
          <thead>
            <tr>
              <th>Property</th>
              <th>Value</th>
            </tr>
          </thead>
          <tbody>
            <GroupRow>
              <th colSpan="2">Base</th>
            </GroupRow>
            {PROPERTIES.map(([name, value], i) => (
              <PropertyRow key={name} $odd={i % 2 === 0}>
                <td>
                  <PropertyName $expandable={name === "Placement"}>
                    {name === "Placement" && (
                      <Expander type="button" aria-label="Expand Placement">
                        <Chevron />
                      </Expander>
                    )}
                    {name}
                  </PropertyName>
                </td>
                <td>{value}</td>
              </PropertyRow>
            ))}
          </tbody>
        </PropertyTable>
      </PropertyBox>
      <Tabs>
        <Tab type="button">View</Tab>
        <Tab type="button" $active>Data</Tab>
      </Tabs>
    </Dock>
  );
};

const App = () => (
  <Window>
    <GlobalStyle />
    <TitleBar>
      <Icon name="logo" size={10} />
      <Title>FreeCAD 0.21.2</Title>
      <WindowButton type="button" aria-label="Minimize">
        <Svg size={7} box="0 0 7 7">
          <path d="M0 3.500H7" stroke="#111" />
        </Svg>
      </WindowButton>
      <WindowButton type="button" aria-label="Restore">
        <Svg size={7} box="0 0 7 7">
          <path d="M2 2V1H6V5H5M1 2H5V6H1Z" fill="none" stroke="#222" strokeWidth="0.8" />
        </Svg>
      </WindowButton>
      <WindowButton type="button" aria-label="Close">
        <CrossIcon />
      </WindowButton>
    </TitleBar>
    <MenuBar>
      {MENUS.map((menu) => (
        <button key={menu} type="button">
          {menu}
        </button>
      ))}
    </MenuBar>
    <Toolbars />
    <Middle>
      <MdiArea>
        <Viewport>
          <Coaster />
          <NavCube />
          <AxisCross />
        </Viewport>
        <MdiTabs>
          <MdiTab>
            <Icon name="logo" size={9} />
            Start page
            <CloseTab type="button" aria-label="Close Start page">
              <CrossIcon size={5} />
            </CloseTab>
          </MdiTab>
          <MdiTab $active>
            <Icon name="logo" size={9} />
            Voronoi Coaster : 1*
            <CloseTab type="button" aria-label="Close Voronoi Coaster" $active>
              <CrossIcon size={5} />
            </CloseTab>
          </MdiTab>
        </MdiTabs>
      </MdiArea>
      <ComboView />
    </Middle>
    <ReportView>
      <DockTop title="Report view" top={3} />
      <ReportBody />
    </ReportView>
    <StatusBar>
      <StatusText>
        Preselected: Voronoi_Coaster.Body001.Pad002.Edge164 (104.926086 mm, 3.406579 mm, -1.000000 mm)
      </StatusText>
      <StatusButton type="button" $wide>
        <Svg size={9}>
          <path d="M3 6C3 0 13 0 13 6V11C13 17 3 17 3 11ZM8 2V7" fill="none" stroke="#222" strokeWidth="1.600" />
        </Svg>
        Blender
      </StatusButton>
      <StatusButton type="button">251,06 mm x 112,12 mm</StatusButton>
    </StatusBar>
  </Window>
);

export default App;
